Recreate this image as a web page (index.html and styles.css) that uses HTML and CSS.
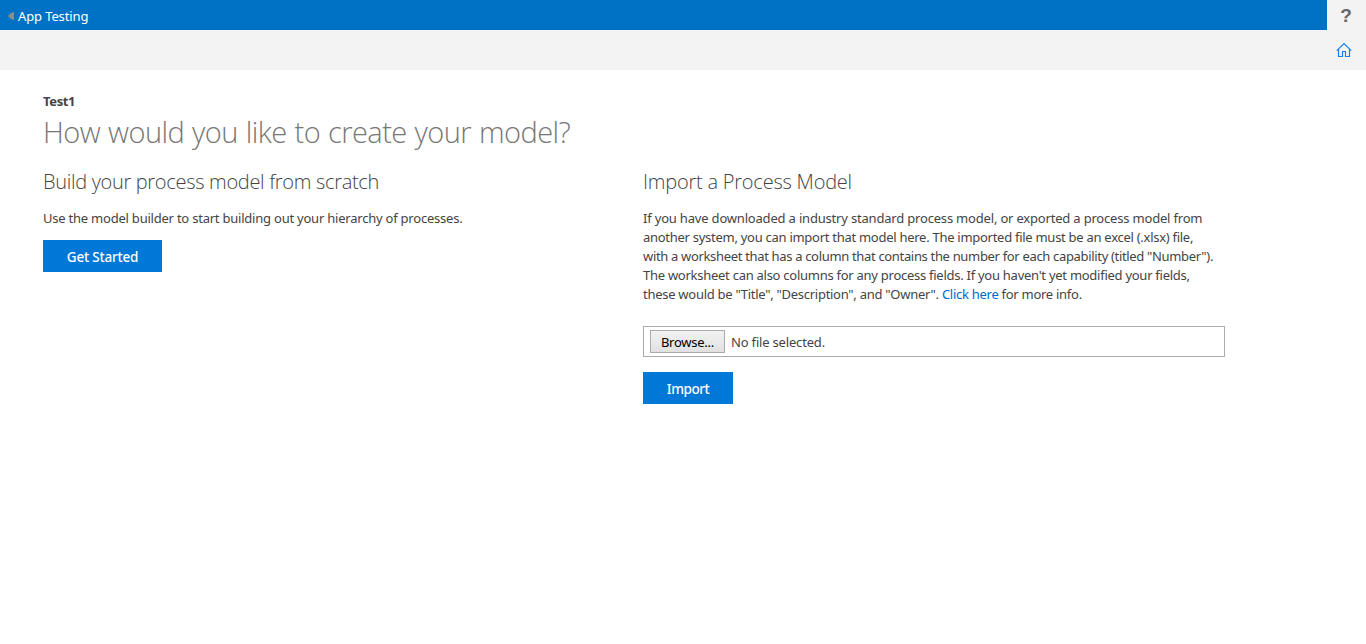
FILE: index.html
```html
<!DOCTYPE html>
<html lang="en">
<head>
<meta charset="utf-8">
<title>App Testing</title>
<link rel="stylesheet" href="styles.css">
</head>
<body>
<header class="topbar">
  <a class="back"><svg class="back-icon" width="6" height="8" viewBox="0 0 6 8"><path d="M0 4 3 1 6 0V8L3 7Z" fill="#8b8d91"/></svg><span class="app-name">App Testing</span></a>
  <span class="help">?</span>
</header>
<nav class="toolbar">
  <svg class="home" width="16" height="16" viewBox="0 0 16 16" fill="none" stroke="#1a7df0" stroke-width="1.2"><path d="M.8 8.6 8 1.5l7.2 7.1M2.5 7v7.5h4v-5h3v5h4V7"/></svg>
</nav>
<main class="page">
  <div class="model-name">Test1</div>
  <h1 class="title">How would you like to create your model?</h1>
  <div class="columns">
    <section class="column">
      <h2 class="heading h-build">Build your process model from scratch</h2>
      <p class="text intro">Use the model builder to start building out your hierarchy of processes.</p>
      <button class="primary start">Get Started</button>
    </section>
    <section class="column">
      <h2 class="heading h-import">Import a Process Model</h2>
      <p class="text">
        <span class="l1">If you have downloaded a industry standard process model, or exported a process model from</span><br>
        <span class="l2">another system, you can import that model here. The imported file must be an excel (.xlsx) file,</span><br>
        <span class="l3">with a worksheet that has a column that contains the number for each capability (titled "Number").</span><br>
        <span class="l4">The worksheet can also columns for any process fields. If you haven't yet modified your fields,</span><br>
        <span class="l5">these would be "Title", "Description", and "Owner". <a class="link">Click here</a> for more info.</span>
      </p>
      <div class="file"><button class="browse">Browse...</button><span class="file-name">No file selected.</span></div>
      <button class="primary import">Import</button>
    </section>
  </div>
</main>
</body>
</html>
```
FILE: styles.css
```css
* { box-sizing: border-box; }
body { margin: 0; background: #fff; color: #444; font: 13px/19px "Noto Sans", "Open Sans", sans-serif; white-space: nowrap; }
h1, h2, p { margin: 0; }
button { font: inherit; padding: 0; border: 0; border-radius: 0; }
.topbar { display: flex; justify-content: space-between; height: 30px; background: #0072c6; color: #fff; }
.back { display: flex; align-items: center; gap: 4px; padding: 2px 0 0 8px; letter-spacing: -.12px; }
.help { width: 39px; padding-right: 1px; background: #f3f3f3; color: #666; font: bold 19px/31px "Liberation Sans", Arial, sans-serif; text-align: center; }
.toolbar { display: flex; justify-content: flex-end; height: 40px; padding: 12px 14px 0 0; background: #f3f3f3; }
.page { padding: 22px 43px 0; }
.model-name { font-weight: 700; letter-spacing: -.35px; }
.title { height: 56px; padding-top: 1px; color: #777; font: 300 29px/40px "Open Sans", sans-serif; letter-spacing: -.57px; word-spacing: 1px; }
.columns { display: grid; grid-template-columns: 582px 582px; gap: 18px; }
.heading { height: 42px; font: 300 20px/29px "Open Sans", sans-serif; }
.h-build { letter-spacing: -.31px; }
.h-import { letter-spacing: -.22px; }
.intro { letter-spacing: -.222px; }
.l1 { letter-spacing: -.187px; }
.l2 { letter-spacing: -.275px; }
.l3 { letter-spacing: -.33px; }
.l4 { letter-spacing: -.265px; }
.l5 { letter-spacing: -.275px; }
.link { color: #0067cc; }
.primary { display: block; height: 32px; background: #0078d7; color: #fff; font-size: 13.5px; font-weight: 500; line-height: 34px; }
.start { width: 119px; margin-top: 12px; letter-spacing: -.2px; }
.import { width: 90px; margin-top: 15px; letter-spacing: -.45px; }
.file { display: flex; align-items: center; gap: 6px; height: 31px; margin-top: 22px; padding-left: 6px; border: 1px solid #ababab; }
.browse { width: 75px; height: 23px; padding-top: 1px; border: 1px solid #ababab; background: linear-gradient(#f2f2f2, #e1e1e1); color: #000; letter-spacing: -.25px; }
.file-name { padding-top: 2px; letter-spacing: -.18px; }
```
